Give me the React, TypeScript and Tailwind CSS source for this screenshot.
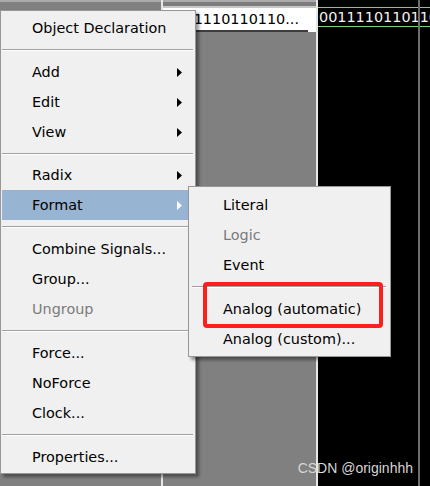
import React from "react";

type Item =
  | { kind: "item"; label: string; arrow?: boolean; disabled?: boolean; active?: boolean }
  | { kind: "sep"; h?: number };

const mainItems: Item[] = [
  { kind: "item", label: "Object Declaration" },
  { kind: "sep" },
  { kind: "item", label: "Add", arrow: true },
  { kind: "item", label: "Edit", arrow: true },
  { kind: "item", label: "View", arrow: true },
  { kind: "sep", h: 13 },
  { kind: "item", label: "Radix", arrow: true },
  { kind: "item", label: "Format", arrow: true, active: true },
  { kind: "sep" },
  { kind: "item", label: "Combine Signals..." },
  { kind: "item", label: "Group..." },
  { kind: "item", label: "Ungroup", disabled: true },
  { kind: "sep" },
  { kind: "item", label: "Force..." },
  { kind: "item", label: "NoForce" },
  { kind: "item", label: "Clock..." },
  { kind: "sep" },
  { kind: "item", label: "Properties..." },
];

const subItems: Item[] = [
  { kind: "item", label: "Literal" },
  { kind: "item", label: "Logic", disabled: true },
  { kind: "item", label: "Event" },
  { kind: "sep" },
  { kind: "item", label: "Analog (automatic)" },
  { kind: "item", label: "Analog (custom)..." },
];

function Arrow({ white }: { white?: boolean }) {
  return (
    <svg width="5" height="9" viewBox="0 0 5 9" className="shrink-0">
      <polygon points="0,0 5,4.5 0,9" fill={white ? "#ffffff" : "#000000"} />
    </svg>
  );
}

function Sep({ h = 14, inset }: { h?: number; inset: string }) {
  return (
    <div className={`flex flex-col ${inset}`} style={{ height: h }}>
      <div className="h-[6px]" />
      <div className="h-px bg-[#a0a0a0]" />
      <div className="h-px bg-white" />
    </div>
  );
}

export default function App() {
  return (
    <div className="relative w-[430px] h-[486px] overflow-hidden bg-[#808080] font-['DejaVu_Sans',Verdana,sans-serif]">
      {/* background panels */}
      <div className="flex h-full">
        <div className="w-[161px] shrink-0 flex flex-col">
          <div className="h-[2px] bg-[#ababab]" />
          <div className="flex-1 bg-[#808080]" />
        </div>
        <div className="w-[2px] shrink-0 bg-[#e6e6e6]" />
        <div className="w-[153px] shrink-0 flex flex-col">
          <div className="h-[2px] bg-[#ababab]" />
          <div className="h-[4px] bg-[#7c7c7c]" />
          <div className="h-[2px] bg-[#c8c8c8]" />
          <div className="h-[22px] bg-white flex items-center justify-end pr-[17px] pt-[1px] text-[14.4px] text-black whitespace-nowrap overflow-hidden">
            00111110110110...
          </div>
          <div className="h-[2px] flex">
            <div className="w-[32px] bg-white" />
            <div className="flex-1 bg-[#3c3c3c]" />
            <div className="w-[8px] bg-white" />
          </div>
          <div className="flex-1 bg-[#808080]" />
        </div>
        <div className="w-[2px] shrink-0 bg-[#e6e6e6]" />
        <div className="relative flex-1 min-w-0 overflow-hidden bg-black flex flex-col">
          <div className="h-[7px]" />
          <div className="h-px bg-[#86cc86]" />
          <div className="h-[18px] flex items-center pl-[1px] pt-[1px] text-[14.4px] text-[#f2f2f2] whitespace-nowrap">
            0011110110110110...
          </div>
          <div className="h-px bg-[#86cc86]" />
          <div className="absolute top-0 bottom-0 left-[100px] w-[2px] bg-[#6e6e6e]" />
        </div>
      </div>

      {/* main context menu */}
      <div className="absolute left-0 top-[10px] w-[196px] border border-[#979797] bg-[#f0f0f0] pt-[2px] pb-[1px] shadow-[3px_3px_3px_rgba(0,0,0,0.4)] text-[14.4px]">
        {mainItems.map((it, i) =>
          it.kind === "sep" ? (
            <Sep key={i} h={it.h} inset="ml-[1px] mr-[2px]" />
          ) : (
            <div
              key={i}
              className={`h-[30px] ml-[1px] mr-[4px] flex items-center justify-between pl-[30px] pr-[9px] ${
                it.active ? "bg-[#98b4d3]" : ""
              } ${it.disabled ? "text-[#7b7b7b]" : "text-black"}`}
            >
              <span className="whitespace-nowrap pt-[2px]">{it.label}</span>
              {it.arrow && <Arrow white={it.active} />}
            </div>
          )
        )}
      </div>

      {/* submenu */}
      <div className="absolute left-[188px] top-[186px] w-[203px] border border-[#979797] bg-[#f0f0f0] pt-[3px] pb-[2px] shadow-[3px_3px_3px_rgba(0,0,0,0.4)] text-[14.4px]">
        {subItems.map((it, i) =>
          it.kind === "sep" ? (
            <Sep key={i} h={it.h} inset="ml-[3px] mr-[4px]" />
          ) : (
            <div
              key={i}
              className={`h-[30px] flex items-center pl-[34px] ${
                it.disabled ? "text-[#7b7b7b]" : "text-black"
              }`}
            >
              <span className="whitespace-nowrap pt-[2px]">{it.label}</span>
            </div>
          )
        )}
      </div>

      {/* red annotation box */}
      <div className="absolute left-[203px] top-[282px] w-[180px] h-[46px] border-[4px] border-[#ff1e1e] rounded-[4px]" />

      {/* watermark */}
      <div className="absolute right-[17px] top-[458px] text-[14px] leading-[20px] text-[#d6d6d6] whitespace-nowrap font-['Liberation_Sans',Arial,sans-serif]">
        CSDN @originhhh
      </div>
    </div>
  );
}
